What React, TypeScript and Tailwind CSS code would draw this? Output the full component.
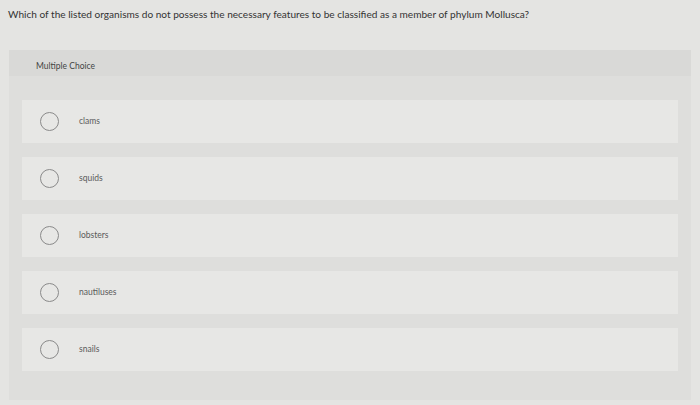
const options = ['clams', 'squids', 'lobsters', 'nautiluses', 'snails']

export default function App() {
  return (
    <div
      className="h-[405px] w-[700px] overflow-hidden bg-[#e4e4e2] text-[#3a3a3a]"
      style={{ fontFamily: 'Lato, "Open Sans", sans-serif' }}
    >
      <div className="px-[8px] pt-[8px] text-[10.1px] leading-[12px] text-[#333]">
        Which of the listed organisms do not possess the necessary features to be classified as a member of phylum Mollusca?
      </div>

      <div className="mx-[9px] mt-[30px] h-[350px] bg-[#dededc]">
        <div className="h-[26px] bg-[#d9d9d7] pl-[27px] pt-[11px] text-[8.5px] leading-[10px] text-[#444]">
          Multiple Choice
        </div>
        <div className="flex flex-col gap-[14px] px-[13px] pt-[24px]">
          {options.map((o) => (
            <div key={o} className="flex h-[43px] items-center bg-[#e7e7e5]">
              <div className="ml-[18px] h-[19px] w-[19px] rounded-full border border-[#8a8a8a]" />
              <span className="ml-[20px] text-[8.5px] text-[#5a5a5a]">{o}</span>
            </div>
          ))}
        </div>
      </div>
    </div>
  )
}
